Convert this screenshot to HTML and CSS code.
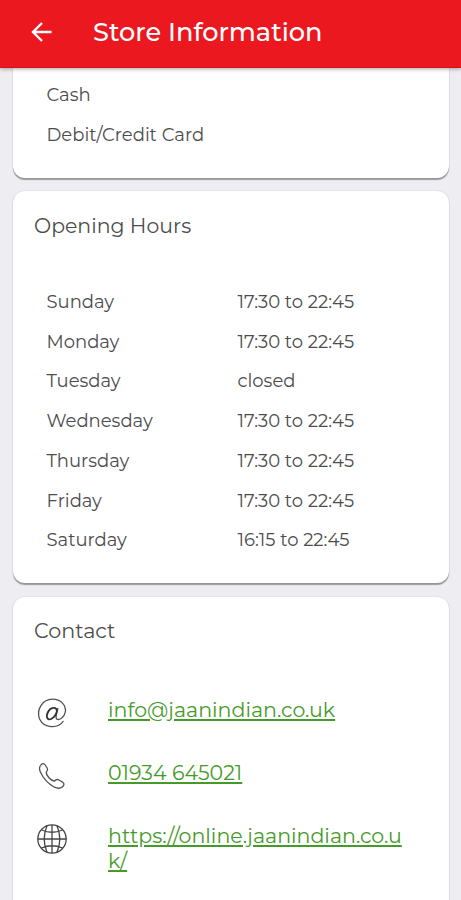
FILE: index.html
```html
<!DOCTYPE html>
<html lang="en">
<head>
<meta charset="utf-8">
<title>Store Information</title>
<link rel="stylesheet" href="styles.css">
</head>
<body>
<header class="bar">
  <svg class="back" width="22" height="22" viewBox="0 0 22 22"><path d="M20.500 11H2M11 2L2 11l9 9"/></svg>
  <h1>Store Information</h1>
</header>
<main>
  <section class="card payment">
    <ul class="list">
      <li>Cash</li>
      <li>Debit/Credit Card</li>
    </ul>
  </section>
  <section class="card hours">
    <h2>Opening Hours</h2>
    <ul class="list">
      <li><span class="day">Sunday</span><span>17:30 to 22:45</span></li>
      <li><span class="day">Monday</span><span>17:30 to 22:45</span></li>
      <li><span class="day">Tuesday</span><span>closed</span></li>
      <li><span class="day">Wednesday</span><span>17:30 to 22:45</span></li>
      <li><span class="day">Thursday</span><span>17:30 to 22:45</span></li>
      <li><span class="day">Friday</span><span>17:30 to 22:45</span></li>
      <li><span class="day">Saturday</span><span>16:15 to 22:45</span></li>
    </ul>
  </section>
  <section class="card contact">
    <h2>Contact</h2>
    <div class="row">
      <svg class="icon" width="32" height="32" viewBox="0 0 32 32"><path d="M27.500 24C22 32 8 31.500 3.600 22C0 12.500 6.500 2.200 16.500 2.200C25 2.200 30.300 8.500 29.300 15C28.400 20.500 23 23.700 20.700 22C19.500 21 20 19 20.400 17L22 11"/><path class="bold" d="M21 14C20.500 9.500 14.500 10 12 15C9.300 20.500 12 24 15.500 21.800C18.500 20 20.300 17 21 14"/></svg>
      <a href="mailto:info@jaanindian.co.uk">info@jaanindian.co.uk</a>
    </div>
    <div class="row">
      <svg class="icon" width="32" height="32" viewBox="0 0 32 32"><path d="M4.500 5.500C6 3.200 8 3.200 9.200 5L11.300 8.200C12.200 10 11.500 11 10.300 12.200C9.800 15 14.800 20.500 18.200 21.200C19.800 19.500 21.500 19.100 23 20L26.700 22.300C28.500 23.500 28.200 25.300 26.500 26.700C24.500 28.500 21.500 28.700 18.500 27.200C12.500 24 7.500 18.700 4.500 12.300C3.200 9.500 3.300 7.200 4.500 5.500Z"/></svg>
      <a href="tel:01934645021">01934 645021</a>
    </div>
    <div class="row">
      <svg class="icon globe" width="32" height="32" viewBox="0 0 32 32"><circle cx="16" cy="16" r="14.200"/><path d="M11 2.800C7.500 11 7.500 21 11 29.200M21 2.800C24.500 11 24.500 21 21 29.200M5.500 7Q16 11.500 26.500 7M5.500 25Q16 20.500 26.500 25M16 2V30M1.700 16H30.300"/></svg>
      <a href="https://online.jaanindian.co.uk/">https://online.jaanindian.co.u<br>k/</a>
    </div>
  </section>
</main>
</body>
</html>
```
FILE: styles.css
```css
* { box-sizing: border-box; }
body {
  margin: 0;
  height: 900px;
  overflow: hidden;
  background: #eeedf2;
  color: #4c4c4c;
  font-family: Montserrat, Inter, "Open Sans", sans-serif;
  font-weight: 400;
}
.bar {
  position: relative;
  display: flex;
  align-items: center;
  height: 68px;
  padding: 0 0 4px 31px;
  background: #eb1820;
  border-bottom: 1px solid #d9121b;
  box-shadow: 0 1px 4px rgba(0, 0, 0, .35);
  color: #fff;
}
.back { fill: none; stroke: #fff; stroke-width: 2.4; }
h1 {
  margin: 0 0 0 40px;
  font-size: 25.600px;
  font-weight: 500;
  line-height: 32px;
  white-space: nowrap;
}
main { padding: 0 12px 0 13px; }
.card {
  background: #fff;
  border-radius: 12px;
  box-shadow: 0 1.500px 1px rgba(0, 0, 0, .35), 0 0 2px rgba(0, 0, 0, .12);
}
.payment { height: 110px; padding-top: 8px; border-radius: 0 0 12px 12px; }
.hours { height: 392px; margin-top: 13px; padding-top: 21px; }
.contact { height: 306px; margin-top: 14px; padding-top: 20px; border-radius: 12px 12px 0 0; }
h2 {
  margin: 0 0 0 21px;
  font-size: 20.450px;
  font-weight: 400;
  line-height: 28px;
}
.list { margin: 0; padding: 0 0 0 33.500px; list-style: none; font-size: 18px; }
.hours .list { margin-top: 42.900px; }
.list li { display: flex; height: 39.750px; line-height: 39.750px; white-space: nowrap; }
.day { width: 191px; }
.row { display: flex; height: 63px; padding-left: 22.500px; }
.contact h2 { margin-bottom: 49px; font-size: 20.700px; }
.icon { flex: none; margin: 3px 40.500px 0 0; fill: none; stroke: #505050; stroke-width: 1.300; }
.icon .bold { stroke: #333; stroke-width: 1.800; }
.globe { stroke: #444; stroke-width: 1.300; }
.row a {
  color: #469a2a;
  font-size: 20.550px;
  line-height: 25px;
  text-decoration: underline;
  text-decoration-thickness: 1.500px;
  text-underline-offset: 2px;
  white-space: nowrap;
  margin-top: 3px;
}
```
